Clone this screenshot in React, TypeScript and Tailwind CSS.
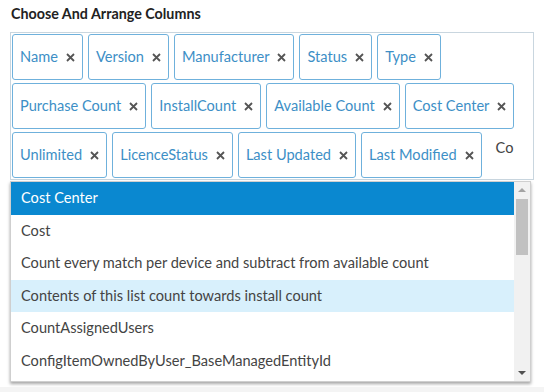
import React from "react";

const rows = [
  ["Name", "Version", "Manufacturer", "Status", "Type"],
  ["Purchase Count", "InstallCount", "Available Count", "Cost Center"],
  ["Unlimited", "LicenceStatus", "Last Updated", "Last Modified"],
];

const items = [
  "Cost Center",
  "Cost",
  "Count every match per device and subtract from available count",
  "Contents of this list count towards install count",
  "CountAssignedUsers",
  "ConfigItemOwnedByUser_BaseManagedEntityId",
];

function Tag({ label }: { label: string }) {
  return (
    <div className="h-[46px] flex items-center pl-[7px] pr-[7px] border border-[#6fb1dc] rounded-[3px] text-[#3d8fc6]">
      <span>{label}</span>
      <svg className="ml-[8px]" width="9" height="9" viewBox="0 0 9 9">
        <path d="M1 1 L8 8 M8 1 L1 8" stroke="#555" strokeWidth="1.8" />
      </svg>
    </div>
  );
}

export default function App() {
  const tags = rows.flat();
  return (
    <div
      className="w-[544px] h-[392px] bg-white relative overflow-hidden"
      style={{ fontFamily: "Lato, sans-serif" }}
    >
      <div className="pl-[11px] pt-[4px] text-[14.3px] font-bold text-[#222] leading-[20px]">
        Choose And Arrange Columns
      </div>
      <div className="ml-[10px] mr-[10px] mt-[8px] border border-[#c9d6df] pl-[1px] pt-[1px] pb-[1px] flex flex-wrap gap-x-[5px] gap-y-[3px] text-[14.6px]">
        {tags.map((t) => (
          <Tag key={t} label={t} />
        ))}
        <div className="ml-[9px] pt-[5px] text-[#444] text-[14.6px]">Co</div>
      </div>
      <div className="ml-[10px] mt-[1px] w-[521px] h-[201px] border border-[#cfcfcf] shadow-[0_2px_3px_rgba(0,0,0,0.35)] flex bg-white text-[14.6px] text-[#444]">
        <div className="flex-1 flex flex-col">
          {items.map((it, i) => (
            <div
              key={it}
              className={
                "h-[32.5px] shrink-0 flex items-center pl-[10px] " +
                (i === 0
                  ? "bg-[#0a88d0] text-white"
                  : i === 3
                  ? "bg-[#d8f0fc]"
                  : "")
              }
            >
              {it}
            </div>
          ))}
        </div>
        <div className="w-[16px] bg-[#f1f1f1] flex flex-col items-center">
          <div className="h-[16px] flex items-center justify-center">
            <svg width="8" height="4" viewBox="0 0 8 4">
              <path d="M0 4 L4 0 L8 4 Z" fill="#a3a3a3" />
            </svg>
          </div>
          <div className="w-[12px] h-[56px] bg-[#c1c1c1] mt-[1px]" />
          <div className="flex-1" />
          <div className="h-[16px] flex items-center justify-center">
            <svg width="8" height="4" viewBox="0 0 8 4">
              <path d="M0 0 L8 0 L4 4 Z" fill="#505050" />
            </svg>
          </div>
        </div>
      </div>
      <div className="absolute left-0 right-0 bottom-0 h-[5px] bg-[#f4f4f4]" />
    </div>
  );
}
